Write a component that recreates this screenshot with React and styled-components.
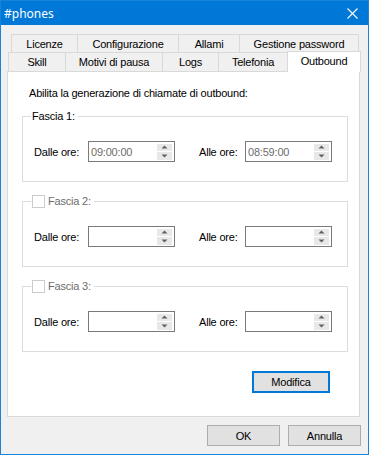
import styled, { createGlobalStyle } from 'styled-components'

const GlobalStyle = createGlobalStyle`
  html, body {
    margin: 0;
    padding: 0;
    background: #ffffff;
  }
  * {
    box-sizing: border-box;
  }
`

const Window = styled.div`
  width: 369px;
  height: 455px;
  border: 1px solid #1883d7;
  display: flex;
  flex-direction: column;
  font-family: "Liberation Sans", Arial, sans-serif;
  font-size: 11px;
  letter-spacing: -0.2px;
  color: #000;
`

const TitleBar = styled.div`
  height: 24px;
  background: #0078d7;
  color: #fff;
  display: flex;
  align-items: center;
  justify-content: space-between;
  padding: 0 10px 0 3px;
  font-family: "Noto Sans", "Open Sans", sans-serif;
  font-size: 12px;
  letter-spacing: 0;
`

const CloseIcon = () => (
  <svg width="11" height="11" viewBox="0 0 11 11">
    <path d="M0.5 0.5 L10.5 10.5 M10.5 0.5 L0.5 10.5" stroke="#fff" strokeWidth="1.1" fill="none" />
  </svg>
)

const Body = styled.div`
  flex: 1;
  background: #f0f0f0;
  padding: 9px 8px 0 6px;
  display: flex;
  flex-direction: column;
`

const TabRow = styled.div`
  display: flex;
  height: ${(p) => p.$height}px;
  padding-left: ${(p) => p.$indent}px;
  align-items: flex-end;
`

const Tab = styled.div`
  width: ${(p) => p.$w}px;
  height: ${(p) => (p.$active ? 21 : p.$h)}px;
  margin-right: -1px;
  margin-bottom: ${(p) => (p.$active ? -1 : 0)}px;
  border: 1px solid #d9d9d9;
  border-bottom: none;
  background: ${(p) => (p.$active ? '#ffffff' : '#f0f0f0')};
  display: flex;
  justify-content: center;
  align-items: ${(p) => (p.$active ? 'flex-start' : 'center')};
  padding-top: ${(p) => (p.$active ? 3 : 0)}px;
  position: relative;
  z-index: ${(p) => (p.$active ? 2 : 1)};
  white-space: nowrap;
`

const Panel = styled.div`
  height: 346px;
  border: 1px solid #d9d9d9;
  background: #ffffff;
  padding: 14px 11px 0 14px;
  display: flex;
  flex-direction: column;
`

const Intro = styled.div`
  height: 14px;
  line-height: 14px;
  padding-left: 7px;
`

const Groups = styled.div`
  margin-top: 16px;
  display: flex;
  flex-direction: column;
  gap: 19px;
`

const GroupBox = styled.div`
  height: 66px;
  border: 1px solid #dcdcdc;
  padding: 0 0 0 11px;
`

const Legend = styled.div`
  margin: -8px 0 0 -3px;
  padding: 0 3px 0 1px;
  height: 14px;
  line-height: 14px;
  width: fit-content;
  background: #ffffff;
  display: flex;
  align-items: center;
  gap: 3px;
  color: ${(p) => (p.$disabled ? '#6d6d6d' : '#000')};
`

const CheckBox = styled.span`
  width: 13px;
  height: 13px;
  border: 1px solid #cccccc;
  background: #ffffff;
  display: inline-block;
`

const FieldRow = styled.div`
  display: flex;
  align-items: center;
  margin-top: 18px;
`

const FieldLabel = styled.span`
  width: ${(p) => p.$w}px;
  white-space: nowrap;
`

const SpinBox = styled.div`
  width: 87px;
  height: 21px;
  border: 1px solid #7a7a7a;
  background: #ffffff;
  display: flex;
  align-items: center;
  justify-content: space-between;
  padding: 1px 2px 1px 2px;
  margin-right: ${(p) => p.$mr || 0}px;
  color: #6d6d6d;
`

const SpinButtons = styled.div`
  width: 15px;
  height: 16px;
  display: flex;
  flex-direction: column;
  gap: 1px;
`

const SpinButton = styled.div`
  flex: 1;
  background: #e8e8e8;
  display: flex;
  align-items: center;
  justify-content: center;
`

const Arrow = ({ up }) => (
  <svg width="7" height="4" viewBox="0 0 7 4">
    <path d={up ? 'M0.5 3.5 L3.5 0.5 L6.5 3.5 Z' : 'M0.5 0.5 L3.5 3.5 L6.5 0.5 Z'} fill="#606060" />
  </svg>
)

const Actions = styled.div`
  display: flex;
  justify-content: flex-end;
  margin-top: 19px;
  padding-right: 18px;
`

const Button = styled.button`
  width: ${(p) => p.$w}px;
  height: ${(p) => p.$h}px;
  border: ${(p) => (p.$default ? '2px solid #0078d7' : '1px solid #adadad')};
  background: #e1e1e1;
  font-family: "Liberation Sans", Arial, sans-serif;
  font-size: 11px;
  letter-spacing: -0.2px;
  color: #000;
  padding: 0;
  display: flex;
  align-items: center;
  justify-content: center;
`

const Footer = styled.div`
  display: flex;
  justify-content: flex-end;
  gap: 8px;
  margin-top: 8px;
  margin-right: -1px;
`

function TimeSpin({ value, mr }) {
  return (
    <SpinBox $mr={mr}>
      <span>{value}</span>
      <SpinButtons>
        <SpinButton>
          <Arrow up />
        </SpinButton>
        <SpinButton>
          <Arrow />
        </SpinButton>
      </SpinButtons>
    </SpinBox>
  )
}

function Fascia({ n, checkbox, from, to }) {
  return (
    <GroupBox>
      <Legend $disabled={checkbox}>
        {checkbox && <CheckBox />}
        <span>Fascia {n}:</span>
      </Legend>
      <FieldRow>
        <FieldLabel $w={54}>Dalle ore:</FieldLabel>
        <TimeSpin value={from} mr={24} />
        <FieldLabel $w={46}>Alle ore:</FieldLabel>
        <TimeSpin value={to} />
      </FieldRow>
    </GroupBox>
  )
}

export default function App() {
  return (
    <>
      <GlobalStyle />
      <Window>
        <TitleBar>
          <span>#phones</span>
          <CloseIcon />
        </TitleBar>
        <Body>
          <TabRow $height={18} $indent={4}>
            <Tab $w={67} $h={18}>Licenze</Tab>
            <Tab $w={102} $h={18}>Configurazione</Tab>
            <Tab $w={62} $h={18}>Allami</Tab>
            <Tab $w={120} $h={18}>Gestione password</Tab>
          </TabRow>
          <TabRow $height={19} $indent={1}>
            <Tab $w={58} $h={19}>Skill</Tab>
            <Tab $w={98} $h={19}>Motivi di pausa</Tab>
            <Tab $w={57} $h={19}>Logs</Tab>
            <Tab $w={70} $h={19}>Telefonia</Tab>
            <Tab $w={74} $active>Outbound</Tab>
          </TabRow>
          <Panel>
            <Intro>Abilita la generazione di chiamate di outbound:</Intro>
            <Groups>
              <Fascia n={1} from="09:00:00" to="08:59:00" />
              <Fascia n={2} checkbox from="" to="" />
              <Fascia n={3} checkbox from="" to="" />
            </Groups>
            <Actions>
              <Button $w={78} $h={22} $default>Modifica</Button>
            </Actions>
          </Panel>
          <Footer>
            <Button $w={73} $h={21}>OK</Button>
            <Button $w={73} $h={21}>Annulla</Button>
          </Footer>
        </Body>
      </Window>
    </>
  )
}
